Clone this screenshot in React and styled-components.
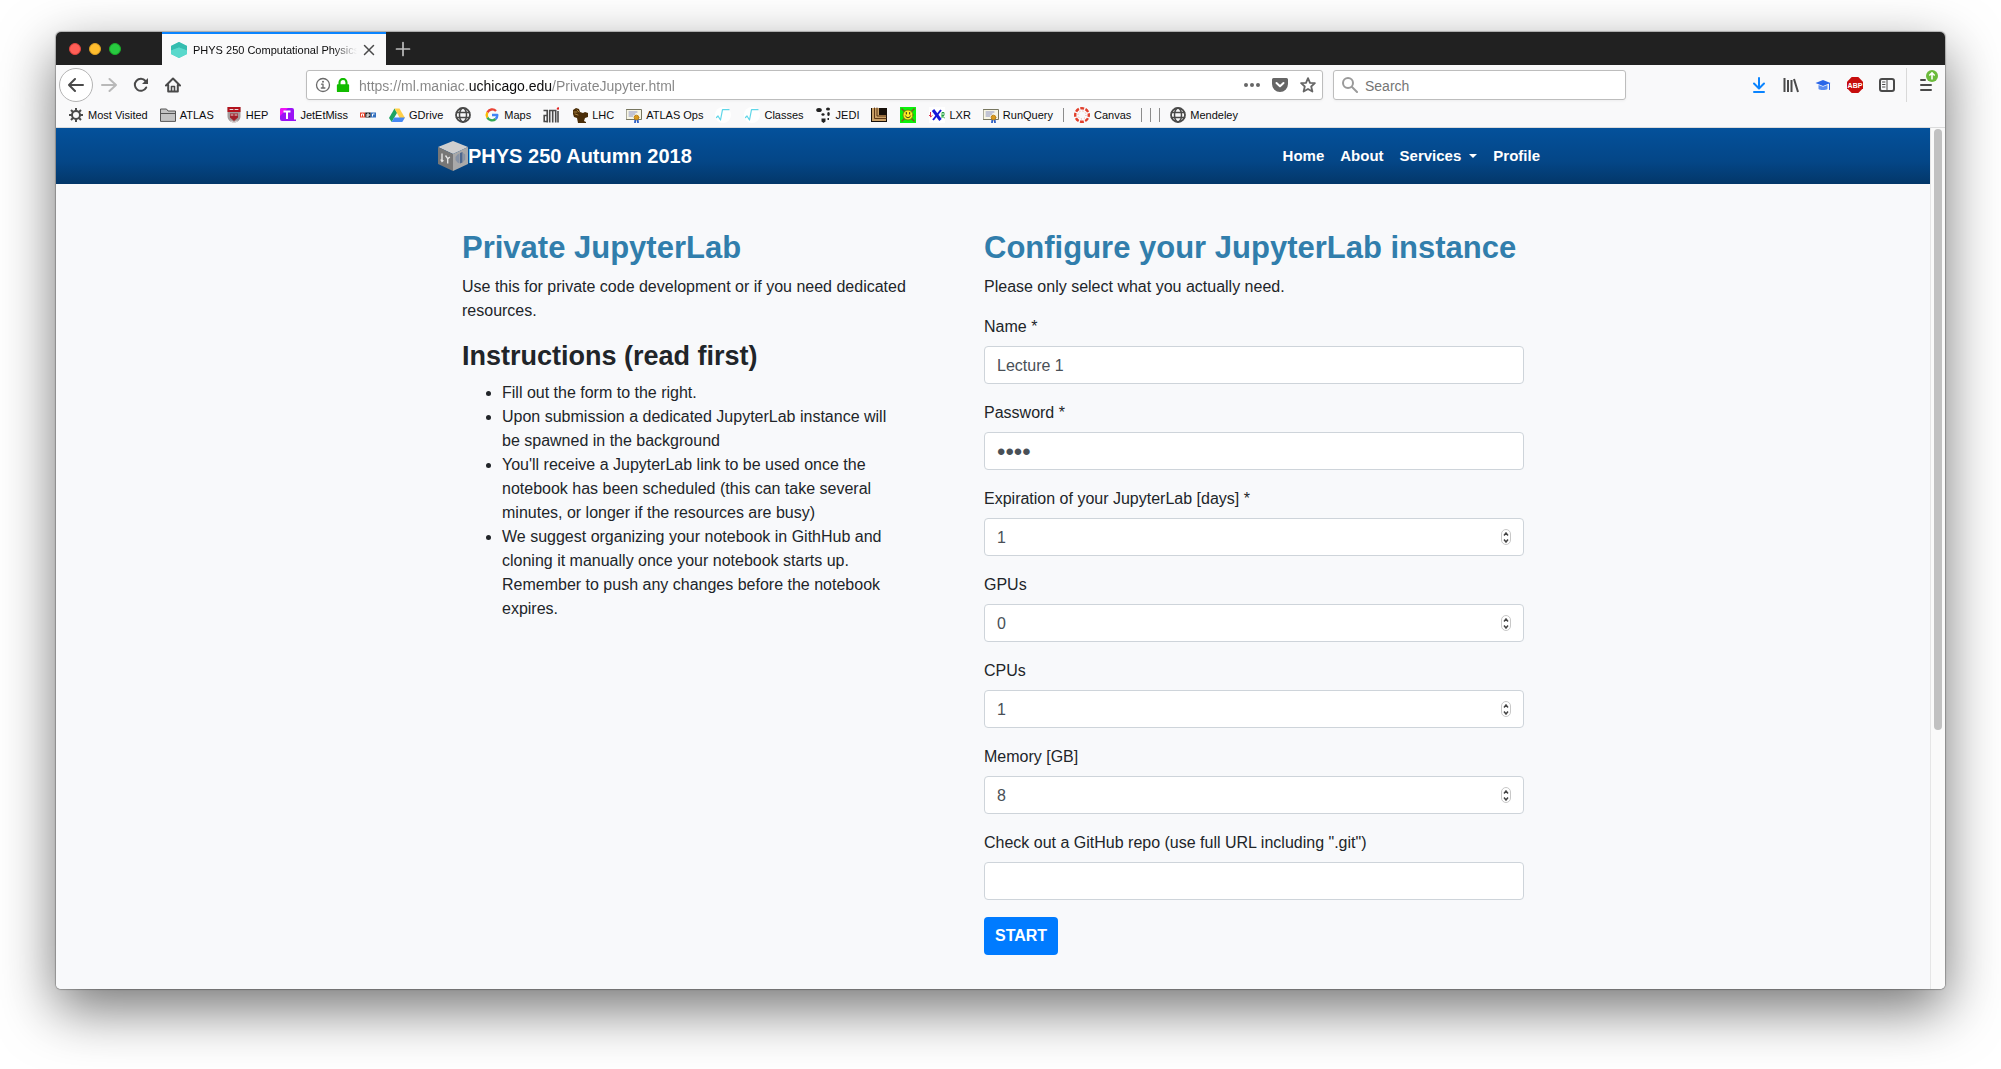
import React from "react";
import styled, { createGlobalStyle } from "styled-components";

const sans = `"Liberation Sans", Arial, Helvetica, sans-serif`;

const GlobalStyle = createGlobalStyle`
  *, *::before, *::after { box-sizing: border-box; }
  body { margin: 0; background: #fff; font-family: ${sans}; }
  #root { display: block; }
  button, input { font-family: inherit; }
  svg { display: block; flex: none; }
`;

/* ---------- window frame ---------- */

const Desktop = styled.div`
  min-height: 100vh;
  display: flex;
  padding: 32px 56px 80px;
  overflow: hidden;
`;

const BrowserWindow = styled.div`
  flex: 1;
  min-width: 0;
  display: flex;
  flex-direction: column;
  overflow: hidden;
  border-radius: 5px;
  background: #f9f9fa;
  box-shadow: 0 0 1px 1px rgba(0, 0, 0, 0.25), 0 20px 55px rgba(0, 0, 0, 0.55);
`;

const TabStrip = styled.div`
  display: flex;
  height: 33px;
  background: #212121;
`;

const WindowControls = styled.div`
  display: flex;
  align-items: center;
  gap: 8px;
  width: 106px;
  padding-left: 13px;
`;

const WindowDot = styled.button`
  width: 12px;
  height: 12px;
  padding: 0;
  border: 1px solid ${(p) => p.$edge};
  border-radius: 50%;
  background: ${(p) => p.$fill};
`;

const Tab = styled.div`
  display: flex;
  align-items: center;
  width: 224px;
  padding: 0 8px 0 9px;
  border-top: 2px solid #0a84ff;
  background: #f9f9fa;
`;

const TabTitle = styled.span`
  flex: 1;
  margin: 0 3px 0 6px;
  overflow: hidden;
  white-space: nowrap;
  font-size: 11px;
  line-height: 16px;
  color: #0c0c0d;
  mask-image: linear-gradient(to left, transparent, #000 24px);
`;

const IconButton = styled.button`
  display: grid;
  place-items: center;
  flex: none;
  width: ${(p) => p.$size || 32}px;
  height: ${(p) => p.$height || p.$size || 32}px;
  padding: 0;
  border: 0;
  background: none;
  color: ${(p) => p.$color || "#4a4a4a"};
`;

const BackButton = styled(IconButton)`
  width: 34px;
  height: 34px;
  border: 1px solid #b4b4b4;
  border-radius: 50%;
  background: #fff;
`;

/* ---------- toolbar ---------- */

const Toolbar = styled.div`
  display: flex;
  align-items: center;
  height: 40px;
  padding: 0 3px;
`;

const FlexSpace = styled.div`
  flex: 0 1 ${(p) => p.$basis}px;
`;

const FieldBox = styled.div`
  display: flex;
  align-items: center;
  height: 30px;
  border: 1px solid #bdbdbd;
  border-radius: 3px;
  background: #fff;
  box-shadow: 0 1px 3px rgba(0, 0, 0, 0.05);
`;

const AddressBox = styled(FieldBox)`
  flex: 1;
  min-width: 0;
  gap: 5px;
  padding: 0 3px 0 8px;
`;

const SearchBox = styled(FieldBox)`
  flex: 0 1 293px;
  gap: 7px;
  margin-left: 10px;
  padding: 0 8px;
`;

const BareInput = styled.input`
  flex: 1;
  min-width: 0;
  padding: 2px 0 0;
  border: 0;
  outline: 0;
  background: none;
  font-size: 14px;
  line-height: 20px;
  color: #0c0c0d;
  &::placeholder { color: #757575; opacity: 1; }
`;

/* The host name is dark, the rest of the address grey. */
const AddressInput = styled(BareInput)`
  margin-left: 4px;
  background: linear-gradient(90deg, #858585 110px, #0c0c0d 110px, #0c0c0d 193px, #858585 193px);
  background-clip: text;
  -webkit-background-clip: text;
  -webkit-text-fill-color: transparent;
`;

const ToolbarDivider = styled.div`
  width: 1px;
  height: 34px;
  margin: 0 3px;
  background: #d9d9d9;
`;

const BookmarksBar = styled.nav`
  display: flex;
  align-items: center;
  gap: 12px;
  height: 23px;
  padding: 0 12px 3px;
  border-bottom: 1px solid #dcdcdc;
  overflow: hidden;
`;

const BookmarkLink = styled.a`
  display: flex;
  align-items: center;
  gap: 4px;
  flex: none;
  margin-right: ${(p) => (p.$bare ? 1 : 0)}px;
  font-size: 11px;
  line-height: 16px;
  white-space: nowrap;
  color: #0c0c0d;
  text-decoration: none;
`;

const BookmarkDivider = styled.span`
  flex: none;
  width: 1px;
  height: 14px;
  margin: 0 -2px;
  background: #8c8c8c;
`;

/* ---------- page ---------- */

const Viewport = styled.div`
  flex: 1;
  display: flex;
`;

const Page = styled.div`
  flex: 1;
  min-width: 0;
  background: #f8f9fb;
  color: #212529;
  font-size: 16px;
  line-height: 24px;
`;

const ScrollTrack = styled.div`
  width: 15px;
  padding: 1px 3px;
  border-left: 1px solid #e6e6e6;
  background: #fafafa;
`;

const ScrollThumb = styled.div`
  width: 8px;
  height: 70%;
  border-radius: 4px;
  background: #c1c1c1;
`;

const SiteHeader = styled.header`
  background: linear-gradient(#04519b, #044687 60%, #033769);
`;

const Container = styled.div`
  max-width: 1140px;
  margin: 0 auto;
  padding: 0 15px;
`;

const SiteBar = styled(Container)`
  display: flex;
  align-items: center;
  justify-content: space-between;
  height: 56px;
`;

const Brand = styled.a`
  display: flex;
  align-items: center;
  font-size: 20px;
  line-height: 30px;
  font-weight: 700;
  color: #fff;
  text-decoration: none;
`;

const SiteNav = styled.nav`
  display: flex;
`;

const SiteLink = styled.a`
  display: flex;
  align-items: center;
  gap: 8px;
  padding: 8px;
  font-size: 15px;
  font-weight: 700;
  color: #fff;
  text-decoration: none;
  &:last-child { padding-right: 8px; }
`;

const Caret = styled.span`
  border: 4px solid transparent;
  border-top-color: #fff;
  border-bottom: 0;
`;

const Columns = styled(Container)`
  display: grid;
  grid-template-columns: minmax(0, 5fr) minmax(0, 6fr);
  column-gap: 72px;
  padding: 45px 39px 34px;
`;

const Title = styled.h2`
  margin: 0 0 8px;
  font-size: 31px;
  line-height: 38px;
  font-weight: 700;
  color: #317eac;
`;

const Subtitle = styled.h3`
  margin: 0 0 8px;
  font-size: 27px;
  line-height: 34px;
  font-weight: 700;
`;

const Lead = styled.p`
  margin: 0 0 16px;
`;

const Steps = styled.ul`
  margin: 0;
  padding: 0 12px 0 40px;
`;

const Form = styled.form`
  display: grid;
  gap: 17px;
`;

const Field = styled.div`
  display: grid;
  gap: 7px;
`;

const InputWrap = styled.div`
  position: relative;
`;

const TextInput = styled.input`
  display: block;
  width: 100%;
  height: 38px;
  padding: 7px 12px 5px;
  border: 1px solid #ced4da;
  border-radius: 4px;
  background: #fff;
  font-size: ${(p) => (p.type === "password" ? 24 : 16)}px;
  line-height: 24px;
  color: #495057;
  appearance: textfield;
  &::-webkit-inner-spin-button, &::-webkit-outer-spin-button { appearance: none; margin: 0; }
`;

const Stepper = styled.div`
  position: absolute;
  top: 11px;
  right: 13px;
  display: grid;
  width: 10px;
  height: 16px;
  border: 1px solid #c8c8c8;
  border-radius: 5px;
  background: #fff;
`;

const StepButton = styled.button`
  display: grid;
  place-items: center;
  padding: 0;
  border: 0;
  background: none;
  color: #444;
`;

const SubmitButton = styled.button`
  justify-self: start;
  height: 38px;
  padding: 0 11px;
  border: 0;
  border-radius: 4px;
  background: #007bff;
  font-size: 16px;
  line-height: 24px;
  font-weight: 700;
  color: #fff;
`;

/* ---------- icons ---------- */

const Icon = ({ size = 16, children, ...rest }) => (
  <svg width={size} height={size} viewBox="0 0 16 16" fill="none" stroke="currentColor" strokeWidth="2" strokeLinecap="round" strokeLinejoin="round" aria-hidden="true" {...rest}>
    {children}
  </svg>
);

const ArrowIcon = ({ flip }) => (
  <Icon>
    <path d={flip ? "M1 8h14M8.500 2L15 8l-6.500 6" : "M15 8H1M7 2L1 8l6 6"} />
  </Icon>
);

const ReloadIcon = () => (
  <Icon>
    <path d="M13.200 10.500A6 6 0 1 1 12.500 4" />
    <path d="M15 1v6H9z" fill="currentColor" stroke="none" />
  </Icon>
);

const HomeIcon = () => (
  <Icon>
    <path d="M1 8.500L8 1.500l7 7M3.200 8v6.500h9.600V8" />
    <path d="M6.500 14V9.500h3V14" strokeWidth="1.600" />
  </Icon>
);

const FaviconHex = () => (
  <Icon stroke="none">
    <path d="M8 0l8 4v8l-8 4-8-4V4z" fill="#4fd0c3" />
    <path d="M8 0l8 4v4.500L8 5.500 0 8.500V4z" fill="#35bdb0" />
    <path d="M0 8.500l8-3 8 3V12l-8 4-8-4z" fill="#5ad9cc" />
  </Icon>
);

const InfoIcon = () => (
  <Icon strokeWidth="1.300" color="#6b6b6b">
    <circle cx="8" cy="8" r="6.500" />
    <path d="M6.500 7.200H8v3.600M6.300 11h3.600" />
    <circle cx="8" cy="4.700" r="1" fill="currentColor" stroke="none" />
  </Icon>
);

const LockIcon = () => (
  <Icon size={14} stroke="none">
    <rect x="1" y="7" width="14" height="9" rx="1" fill="#12bc00" />
    <path d="M4 8V5a4 4 0 0 1 8 0v3" stroke="#12bc00" strokeWidth="2.400" />
  </Icon>
);

const DotsIcon = () => (
  <Icon fill="currentColor" stroke="none">
    <circle cx="2" cy="8" r="2" /><circle cx="8" cy="8" r="2" /><circle cx="14" cy="8" r="2" />
  </Icon>
);

const PocketIcon = () => (
  <Icon>
    <path d="M1.500 1h13A1.500 1.500 0 0 1 16 2.500V7A8 8 0 0 1 0 7V2.500A1.500 1.500 0 0 1 1.500 1z" fill="currentColor" stroke="none" />
    <path d="M4.500 6L8 9.300 11.500 6" stroke="#fff" />
  </Icon>
);

const StarIcon = () => (
  <Icon strokeWidth="1.800">
    <path d="M8 1.200l2 4.600 4.900.4-3.700 3.300 1.200 5L8 11.900l-4.400 2.600 1.200-5L1.100 6.200 6 5.800z" />
  </Icon>
);

const MagnifierIcon = () => (
  <Icon color="#9a9a9a">
    <circle cx="6" cy="6" r="5" /><path d="M10 10l5 5" />
  </Icon>
);

const DownloadIcon = () => (
  <Icon>
    <path d="M8 1v10M3 6.500l5 5 5-5M3 15h10" />
  </Icon>
);

const LibraryIcon = () => (
  <Icon strokeLinecap="butt">
    <path d="M1.500 1v14M5 3v12M8.500 3v12M11 2l4 13" />
  </Icon>
);

const CapIcon = () => (
  <Icon stroke="none">
    <path d="M8 3L15.500 6 8 9 .500 6z" fill="#2a66e8" />
    <path d="M3.500 8L8 9.800l4.500-1.800v4C11 13.300 5 13.300 3.500 12z" fill="#5b8df0" />
    <path d="M14.500 6.500v6" stroke="#2a66e8" strokeWidth="1" />
  </Icon>
);

const BlockIcon = () => (
  <Icon stroke="none">
    <path d="M4.700 0h6.600L16 4.700v6.600L11.300 16H4.700L0 11.300V4.700z" fill="#c70d0d" />
    <text x="8" y="10.600" textAnchor="middle" fontSize="7" fontWeight="700" fill="#fff">ABP</text>
  </Icon>
);

const SidebarIcon = () => (
  <Icon>
    <rect x="1" y="2" width="14" height="12" rx="2" />
    <path d="M8 2v12" strokeWidth="1" /><path d="M3.500 5h2.500M3.500 7.500h2.500M3.500 10h2.500" strokeWidth="1" />
  </Icon>
);

const MenuIcon = () => (
  <svg width="26" height="34" viewBox="0 0 26 34" fill="none" aria-hidden="true">
    <path d="M8 12h4M8 17h10M8 22h10" stroke="#4a4a4a" strokeWidth="2" strokeLinecap="round" />
    <circle cx="19" cy="8" r="6" fill="#6cbb3c" />
    <path d="M19 11.500V5M16.300 7.500L19 4.900l2.700 2.600" stroke="#fff" strokeWidth="1.600" />
  </svg>
);

const GearIcon = () => (
  <Icon color="#4a4a4a" strokeLinecap="butt">
    <circle cx="8" cy="8" r="4" />
    <path d="M8 1v3M8 12v3M1 8h3M12 8h3M3 3l2.200 2.200M10.800 10.800L13 13M13 3l-2.200 2.200M5.200 10.800L3 13" />
  </Icon>
);

const FolderIcon = () => (
  <Icon strokeWidth="1" color="#555">
    <path d="M.500 14V2h6l1.500 2h7.500v10z" fill="#c4c4c4" /><path d="M.500 6.500h15" />
  </Icon>
);

const ShieldIcon = () => (
  <Icon stroke="none">
    <path d="M1.500 0h13v9c0 4-3 6-6.500 7-3.500-1-6.500-3-6.500-7z" fill="#a39c9c" />
    <path d="M1.500 0h13v5h-13z" fill="#b3121d" />
    <path d="M4 6.500h8v4L8 14l-4-3.500z" fill="#a2202a" />
    <path d="M4 2.500h3M9 2.500h3M5 8h2M9 8h2M5 14l3 1.500 3-1.500" stroke="#e8dcdc" strokeWidth="1" />
  </Icon>
);

const JetIcon = () => (
  <Icon stroke="none">
    <path d="M2 1h10a2 2 0 0 1 2 2v9.500h2V14H2a2 2 0 0 1-2-2V3a2 2 0 0 1 2-2z" fill="#9a12f5" />
    <path d="M2 1h6L0 9V3a2 2 0 0 1 2-2z" fill="#f012f5" />
    <path d="M3.500 4.500h7M7 4.500V12" stroke="#fff" strokeWidth="2" strokeLinecap="butt" />
  </Icon>
);

const NprIcon = () => (
  <Icon stroke="none">
    <path d="M0 5.500h5.300v5H0z" fill="#e8432a" /><path d="M5.300 5.500h5.400v5H5.300z" fill="#151515" /><path d="M10.700 5.500H16v5h-5.300z" fill="#3370c0" />
    <path d="M1.500 9.500V7h2v2.500M7 10V7h2v2H7M12.500 9.500V7H14.500" stroke="#fff" strokeWidth="1" strokeLinecap="butt" />
  </Icon>
);

const DriveIcon = () => (
  <Icon stroke="none">
    <path d="M5.500 1.500L0 11l2.700 4 5.400-9.300z" fill="#1da462" />
    <path d="M5.500 1.500h5L16 11h-5.300z" fill="#ffcf48" />
    <path d="M5.200 10.500H16L13.300 15H2.700z" fill="#4688f4" />
  </Icon>
);

const GlobeIcon = () => (
  <Icon strokeWidth="1.500" color="#4a4a4a">
    <circle cx="8" cy="8" r="7" strokeWidth="1.800" /><ellipse cx="8" cy="8" rx="3.500" ry="7" /><path d="M1.500 5.500h13M1.500 10.500h13" />
  </Icon>
);

const GoogleIcon = () => (
  <Icon strokeWidth="2.400" strokeLinecap="butt">
    <path d="M12 4A5.300 5.300 0 0 0 3.400 5.400" stroke="#ea4335" />
    <path d="M3.400 5.400a5.300 5.300 0 0 0 0 5.200" stroke="#fbbc05" />
    <path d="M3.400 10.600A5.300 5.300 0 0 0 11.600 12" stroke="#34a853" />
    <path d="M11.600 12A5 5 0 0 0 13.300 8H8" stroke="#4285f4" />
  </Icon>
);

const AmiIcon = () => (
  <Icon strokeWidth="1.600" color="#4a4a4a" strokeLinecap="butt" strokeLinejoin="miter">
    <path d="M.500 3.500h3.700V15.500M4.200 8.500H1.200v6h3M6.700 15.500V3.500h6V15.500M9.700 3.500v12M15 4v11.500" />
    <path d="M14.300 2.500L15.800.500" stroke="#e02020" strokeWidth="2" />
  </Icon>
);

const LhcIcon = () => (
  <Icon stroke="none">
    <path d="M1 3l3-2 3 1 1 3 3 1 2-1 3 1v4l-3 1-1 3 2 1v1H6l-1-5-3-1-1-3z" fill="#4a2d08" />
    <path d="M2 5h3M5 3l2 2M3 7l3 1" stroke="#a8803c" strokeWidth="1" />
  </Icon>
);

const CertificateIcon = () => (
  <Icon strokeWidth="1">
    <path d="M.500 2.500h15v10H.500z" fill="#f7f5e4" stroke="#777660" />
    <path d="M3 5h8M3 7h6M3 9h4" stroke="#8c93c4" />
    <path d="M9.500 12l-.500 3.500M11.500 12l.500 3.500" stroke="#2d5fc4" strokeWidth="1.800" />
    <circle cx="10.500" cy="10.500" r="2.300" fill="#d99a1c" stroke="#c08414" />
  </Icon>
);

const RootIcon = () => (
  <Icon strokeWidth="1.200">
    <circle cx="8" cy="8" r="8" fill="#fff" stroke="none" />
    <path d="M1.500 10.500l1.500-1.500 2.500 4L7.500 2.700h6.500" stroke="#5fd6e8" />
  </Icon>
);

const JediIcon = () => (
  <Icon stroke="none" fill="#222">
    <ellipse cx="3" cy="3" rx="2.800" ry="2" /><ellipse cx="12" cy="2" rx="2" ry="1.500" />
    <ellipse cx="7" cy="7.500" rx="1.600" ry="1.300" /><ellipse cx="12.500" cy="7" rx="1.300" ry="2" />
    <path d="M5.500 11.500h4v3l-2 1.500-2-1.500zM11.500 11h1.500v2h-1.500z" />
  </Icon>
);

const FrameIcon = () => (
  <Icon stroke="none">
    <path d="M0 1h16v14H0z" fill="#17100a" /><path d="M1 1h7v7h7v6H1z" fill="#c9a067" />
    <path d="M3.500 1v10.500H15M6 1v8h9" stroke="#5b3515" strokeWidth="1" />
  </Icon>
);

const SmileyIcon = () => (
  <Icon stroke="none">
    <path d="M0 0h16v16H0z" fill="#0bf20b" />
    <path d="M2 2l12 12M14 2L2 14" stroke="#7a5a20" strokeWidth="1.500" />
    <circle cx="8" cy="8" r="5" fill="#ffee22" stroke="#6e6a10" strokeWidth=".8" />
    <path d="M6.300 5.500v1.500M9.700 5.500v1.500M5.500 9c1 2.300 4 2.300 5 0" stroke="#222" strokeWidth="1" />
  </Icon>
);

const LxrIcon = () => (
  <Icon strokeLinecap="butt">
    <path d="M0 0h16v16H0z" fill="#fff" stroke="none" />
    <path d="M1.500 5v5l2-1.500M0 9l2-2" stroke="#e03050" strokeWidth="1" />
    <path d="M4 3l7.500 10" stroke="#1616d8" strokeWidth="3" /><path d="M12 3L4 13" stroke="#1616d8" />
    <path d="M13 11V5.500h2v3h-2l3 3" stroke="#20a040" strokeWidth="1" />
  </Icon>
);

const CanvasIcon = () => (
  <Icon strokeLinecap="butt" strokeLinejoin="miter">
    <circle cx="8" cy="8" r="6.800" stroke="#e13f2b" strokeWidth="2.400" strokeDasharray="3.900 1.440" strokeDashoffset="1.950" />
    <circle cx="8" cy="8" r="4" stroke="#e13f2b" strokeWidth="1" strokeDasharray="1 2.140" strokeOpacity=".5" />
  </Icon>
);

const CubeLogo = () => (
  <svg width="30" height="30" viewBox="0 0 30 30" aria-hidden="true">
    <path d="M15 0l15 6-15 7L0 6z" fill="#cfcfcf" />
    <path d="M0 6l15 7v17L0 23z" fill="#777" />
    <path d="M30 6l-15 7v17l15-7z" fill="#a9a9a9" />
    <path d="M4 12.500v8M2.800 18.500L4 20.500l1.400-1.300M7.500 14.500l2.300 3.300 2-1.800M9.700 17.500v5" fill="none" stroke="#e6e6e6" strokeWidth="1.400" />
    <path d="M21.500 12.500v10l-2-1-2-2.500v-3l2-2.500z" fill="#8793a5" /><path d="M22 12l2.500-1v10.500l-2.500 1z" fill="#4e688e" />
    <path d="M25.200 12l2 1.500v5l-2 2.500z" fill="#8793a5" />
  </svg>
);

const Chevron = ({ down }) => (
  <svg width="6" height="4" viewBox="0 0 6 4" aria-hidden="true">
    <path d={down ? "M1 .5L3 3 5 .5" : "M1 3.500L3 1l2 2.500"} fill="none" stroke="currentColor" strokeWidth="1.500" />
  </svg>
);

/* ---------- data ---------- */

const bookmarks = [
  { icon: GearIcon, text: "Most Visited" },
  { icon: FolderIcon, text: "ATLAS" },
  { icon: ShieldIcon, text: "HEP" },
  { icon: JetIcon, text: "JetEtMiss" },
  { icon: NprIcon, label: "NPR" },
  { icon: DriveIcon, text: "GDrive" },
  { icon: GlobeIcon, label: "Web" },
  { icon: GoogleIcon, text: "Maps" },
  { icon: AmiIcon, label: "AMI" },
  { icon: LhcIcon, text: "LHC" },
  { icon: CertificateIcon, text: "ATLAS Ops" },
  { icon: RootIcon, label: "Root" },
  { icon: RootIcon, text: "Classes" },
  { icon: JediIcon, text: "JEDI" },
  { icon: FrameIcon, label: "Frame" },
  { icon: SmileyIcon, label: "Smiley" },
  { icon: LxrIcon, text: "LXR" },
  { icon: CertificateIcon, text: "RunQuery" },
  {},
  { icon: CanvasIcon, text: "Canvas" },
  {},
  {},
  {},
  { icon: GlobeIcon, text: "Mendeley" },
];

const steps = [
  "Fill out the form to the right.",
  "Upon submission a dedicated JupyterLab instance will be spawned in the background",
  "You'll receive a JupyterLab link to be used once the notebook has been scheduled (this can take several minutes, or longer if the resources are busy)",
  "We suggest organizing your notebook in GithHub and cloning it manually once your notebook starts up. Remember to push any changes before the notebook expires.",
];

const fields = [
  { id: "name", label: "Name *", type: "text", value: "Lecture 1" },
  { id: "password", label: "Password *", type: "password", value: "abcd" },
  { id: "expiration", label: "Expiration of your JupyterLab [days] *", type: "number", value: "1" },
  { id: "gpus", label: "GPUs", type: "number", value: "0" },
  { id: "cpus", label: "CPUs", type: "number", value: "1" },
  { id: "memory", label: "Memory [GB]", type: "number", value: "8" },
  { id: "repo", label: 'Check out a GitHub repo (use full URL including ".git")', type: "text", value: "" },
];

function FormField({ id, label, type, value }) {
  const ref = React.useRef(null);
  return (
    <Field>
      <label htmlFor={id}>{label}</label>
      <InputWrap>
        <TextInput ref={ref} id={id} type={type} defaultValue={value} autoComplete="off" />
        {type === "number" && (
          <Stepper>
            <StepButton type="button" aria-label={`Increase ${label}`} onClick={() => ref.current.stepUp()}><Chevron /></StepButton>
            <StepButton type="button" aria-label={`Decrease ${label}`} onClick={() => ref.current.stepDown()}><Chevron down /></StepButton>
          </Stepper>
        )}
      </InputWrap>
    </Field>
  );
}

export default function App() {
  return (
    <>
      <GlobalStyle />
      <Desktop>
        <BrowserWindow>
          <TabStrip>
            <WindowControls>
              <WindowDot $fill="#ff5f57" $edge="#e0443e" aria-label="Close window" />
              <WindowDot $fill="#ffbd2e" $edge="#dea123" aria-label="Minimize" />
              <WindowDot $fill="#28c940" $edge="#1aab29" aria-label="Zoom" />
            </WindowControls>
            <Tab>
              <FaviconHex />
              <TabTitle>PHYS 250 Computational Physics</TabTitle>
              <IconButton $size={18} aria-label="Close tab">
                <Icon size={12}><path d="M2 2l12 12M14 2L2 14" /></Icon>
              </IconButton>
            </Tab>
            <IconButton $size={34} $height={33} $color="#bdbdbd" aria-label="New tab">
              <Icon><path d="M8 1.500v13M1.500 8h13" strokeWidth="1.700" /></Icon>
            </IconButton>
          </TabStrip>

          <Toolbar>
            <BackButton aria-label="Back"><ArrowIcon /></BackButton>
            <IconButton $color="#b9b9b9" aria-label="Forward"><ArrowIcon flip /></IconButton>
            <IconButton aria-label="Reload"><ReloadIcon /></IconButton>
            <IconButton aria-label="Home"><HomeIcon /></IconButton>
            <FlexSpace $basis={117} />
            <AddressBox>
              <InfoIcon />
              <LockIcon />
              <AddressInput aria-label="Address" defaultValue="https://ml.maniac.uchicago.edu/PrivateJupyter.html" />
              <IconButton $size={23} $color="#666" aria-label="Page actions"><DotsIcon /></IconButton>
              <IconButton $size={23} $color="#666" aria-label="Save to Pocket"><PocketIcon /></IconButton>
              <IconButton $size={23} $color="#666" aria-label="Bookmark this page"><StarIcon /></IconButton>
            </AddressBox>
            <SearchBox>
              <MagnifierIcon />
              <BareInput aria-label="Search" placeholder="Search" />
            </SearchBox>
            <FlexSpace $basis={117} />
            <IconButton $color="#0a84ff" aria-label="Downloads"><DownloadIcon /></IconButton>
            <IconButton aria-label="Library"><LibraryIcon /></IconButton>
            <IconButton aria-label="Scholar"><CapIcon /></IconButton>
            <IconButton aria-label="Ad blocker"><BlockIcon /></IconButton>
            <IconButton aria-label="Sidebars"><SidebarIcon /></IconButton>
            <ToolbarDivider />
            <IconButton $height={40} aria-label="Menu"><MenuIcon /></IconButton>
          </Toolbar>

          <BookmarksBar aria-label="Bookmarks">
            {bookmarks.map(({ icon: Glyph, text, label }, i) =>
              Glyph ? (
                <BookmarkLink key={i} href="#" $bare={!text} aria-label={text ? undefined : label}>
                  <Glyph />
                  {text}
                </BookmarkLink>
              ) : (
                <BookmarkDivider key={i} />
              )
            )}
          </BookmarksBar>

          <Viewport>
            <Page>
              <SiteHeader>
                <SiteBar>
                  <Brand href="#"><CubeLogo />PHYS 250 Autumn 2018</Brand>
                  <SiteNav>
                    <SiteLink href="#">Home</SiteLink>
                    <SiteLink href="#">About</SiteLink>
                    <SiteLink href="#">Services <Caret /></SiteLink>
                    <SiteLink href="#">Profile</SiteLink>
                  </SiteNav>
                </SiteBar>
              </SiteHeader>
              <Columns as="main">
                <section>
                  <Title>Private JupyterLab</Title>
                  <Lead>Use this for private code development or if you need dedicated resources.</Lead>
                  <Subtitle>Instructions (read first)</Subtitle>
                  <Steps>
                    {steps.map((step) => <li key={step}>{step}</li>)}
                  </Steps>
                </section>
                <section>
                  <Title>Configure your JupyterLab instance</Title>
                  <Lead>Please only select what you actually need.</Lead>
                  <Form onSubmit={(e) => e.preventDefault()}>
                    {fields.map((field) => <FormField key={field.id} {...field} />)}
                    <SubmitButton type="submit">START</SubmitButton>
                  </Form>
                </section>
              </Columns>
            </Page>
            <ScrollTrack><ScrollThumb /></ScrollTrack>
          </Viewport>
        </BrowserWindow>
      </Desktop>
    </>
  );
}
